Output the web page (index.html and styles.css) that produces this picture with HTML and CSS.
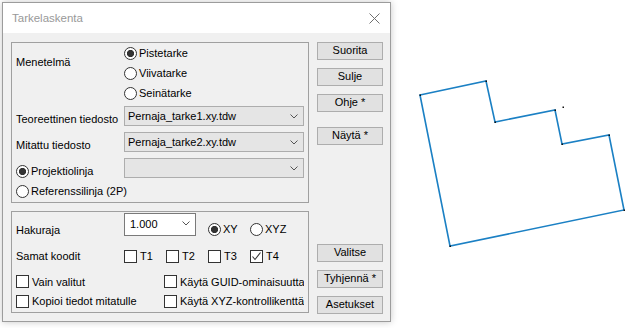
FILE: index.html
```html
<!DOCTYPE html>
<html lang="fi">
<head>
    <meta charset="UTF-8">
    <meta name="viewport" content="width=device-width, initial-scale=1.0">
    <title>Tarkelaskenta</title>
    <link rel="stylesheet" href="styles.css">
</head>
<body>
<div class="screen">
    <div class="dialog">
        <div class="titlebar">
            <span class="title">Tarkelaskenta</span>
            <svg class="close" width="11" height="11" viewBox="0 0 11 11">
                <path d="M0.5 0.5L10.5 10.5M10.5 0.5L0.5 10.5" stroke="#707070" stroke-width="1" fill="none"/>
            </svg>
        </div>

        <div class="dialog-body">
            <div class="groups">
                <div class="group method-group">
                    <div class="row method-row">
                        <span class="label method-label">Menetelmä</span>
                        <div class="radio-stack">
                            <div class="radio checked"><span class="circle"></span>Pistetarke</div>
                            <div class="radio"><span class="circle"></span>Viivatarke</div>
                            <div class="radio"><span class="circle"></span>Seinätarke</div>
                        </div>
                    </div>
                    <div class="row combo-row first">
                        <span class="label">Teoreettinen tiedosto</span>
                        <div class="combo">
                            <span class="combo-text">Pernaja_tarke1.xy.tdw</span>
                            <svg class="chevron" width="8" height="5" viewBox="0 0 8 5"><path d="M0.5 0.5L4 4L7.5 0.5" stroke="#555" fill="none"/></svg>
                        </div>
                    </div>
                    <div class="row combo-row">
                        <span class="label">Mitattu tiedosto</span>
                        <div class="combo">
                            <span class="combo-text">Pernaja_tarke2.xy.tdw</span>
                            <svg class="chevron" width="8" height="5" viewBox="0 0 8 5"><path d="M0.5 0.5L4 4L7.5 0.5" stroke="#555" fill="none"/></svg>
                        </div>
                    </div>
                    <div class="row combo-row">
                        <div class="radio checked label-radio"><span class="circle"></span>Projektiolinja</div>
                        <div class="combo">
                            <span class="combo-text"></span>
                            <svg class="chevron" width="8" height="5" viewBox="0 0 8 5"><path d="M0.5 0.5L4 4L7.5 0.5" stroke="#555" fill="none"/></svg>
                        </div>
                    </div>
                    <div class="row ref-row">
                        <div class="radio"><span class="circle"></span>Referenssilinja (2P)</div>
                    </div>
                </div>

                <div class="group search-group">
                    <div class="row search-row">
                        <span class="label search-label">Hakuraja</span>
                        <div class="edit-combo">
                            <span class="combo-text">1.000</span>
                            <svg class="chevron" width="8" height="5" viewBox="0 0 8 5"><path d="M0.5 0.5L4 4L7.5 0.5" stroke="#555" fill="none"/></svg>
                        </div>
                        <div class="inline-radios">
                            <div class="radio checked cell"><span class="circle"></span>XY</div>
                            <div class="radio cell"><span class="circle"></span>XYZ</div>
                        </div>
                    </div>
                    <div class="row codes-row">
                        <span class="label">Samat koodit</span>
                        <div class="check cell"><span class="box"></span>T1</div>
                        <div class="check cell"><span class="box"></span>T2</div>
                        <div class="check cell"><span class="box"></span>T3</div>
                        <div class="check cell checked"><span class="box"><svg width="11" height="11" viewBox="0 0 11 11"><path d="M1.5 5.5L4 8.5L9.5 1.5" stroke="#333" stroke-width="1.1" fill="none"/></svg></span>T4</div>
                    </div>
                    <div class="row option-row">
                        <div class="check wide"><span class="box"></span>Vain valitut</div>
                        <div class="check clipped"><span class="box"></span>Käytä GUID-ominaisuutta</div>
                    </div>
                    <div class="row option-row last">
                        <div class="check wide"><span class="box"></span>Kopioi tiedot mitatulle</div>
                        <div class="check clipped"><span class="box"></span>Käytä XYZ-kontrollikenttää</div>
                    </div>
                </div>
            </div>

            <div class="buttons">
                <div class="button">Suorita</div>
                <div class="button">Sulje</div>
                <div class="button">Ohje *</div>
                <div class="button show">Näytä *</div>
                <div class="button select">Valitse</div>
                <div class="button">Tyhjennä *</div>
                <div class="button">Asetukset</div>
            </div>
        </div>
    </div>

    <div class="canvas">
        <svg width="246" height="328" viewBox="391 0 246 328">
            <polygon class="outline" points="420,95 486,81 495,122 555,110 562,144 609,135 624,210 450,246"/>
            <g class="vertex">
                <rect x="419.5" y="94.5" width="1.5" height="1.5"/>
                <rect x="485.5" y="80.5" width="1.5" height="1.5"/>
                <rect x="494.5" y="121.5" width="1.5" height="1.5"/>
                <rect x="554.5" y="109.5" width="1.5" height="1.5"/>
                <rect x="561.5" y="143.5" width="1.5" height="1.5"/>
                <rect x="608.5" y="134.5" width="1.5" height="1.5"/>
                <rect x="623.5" y="209.5" width="1.5" height="1.5"/>
                <rect x="449.5" y="245.5" width="1.5" height="1.5"/>
                <rect x="562.5" y="106.5" width="1.5" height="1.5"/>
            </g>
        </svg>
    </div>
</div>
</body>
</html>
```

FILE: styles.css
```css
:root {
    --face: #f0f0f0;
    --frame: #a0a0a0;
    --btn: #e1e1e1;
    --btn-border: #adadad;
    --ink: #000000;
    --mark: #333333;
    --line-blue: #1b80c4;
}

body {
    margin: 0;
    background: #ffffff;
    font-family: 'Liberation Sans', Arial, sans-serif;
    font-size: 11px;
    color: var(--ink);
}

.screen {
    display: flex;
    height: 328px;
}

.dialog {
    margin: 2px 0 0 2px;
    width: 389px;
    height: 320px;
    box-sizing: border-box;
    border: 1px solid #9c9c9c;
    background: var(--face);
    box-shadow: 0 0 7px rgba(0, 0, 0, 0.22);
    display: flex;
    flex-direction: column;
}

.titlebar {
    height: 30px;
    flex: none;
    background: #ffffff;
    display: flex;
    align-items: center;
    justify-content: space-between;
    padding: 0 10px 0 9px;
}

.title {
    font-size: 11.5px;
    color: #999999;
    line-height: 16px;
}

.dialog-body {
    flex: 1;
    display: flex;
    gap: 8px;
    padding: 9px 7px 7px 8px;
}

.groups {
    width: 298px;
    display: flex;
    flex-direction: column;
    gap: 8px;
}

.group {
    border: 1px solid var(--frame);
    box-sizing: border-box;
    padding: 0 4px;
}

.method-group {
    height: 161px;
}

.search-group {
    height: 102px;
}

.row {
    display: flex;
}

.label {
    width: 108px;
    flex: none;
    line-height: 16px;
    white-space: nowrap;
}

/* method block */
.method-label {
    padding-top: 11px;
}

.radio-stack {
    display: flex;
    flex-direction: column;
}

.radio,
.check {
    display: flex;
    align-items: center;
    height: 20px;
    white-space: nowrap;
    line-height: 16px;
}

.circle {
    width: 13px;
    height: 13px;
    box-sizing: border-box;
    border: 1px solid var(--mark);
    border-radius: 50%;
    background: #ffffff;
    margin-right: 2px;
    flex: none;
}

.radio.checked .circle {
    background: radial-gradient(circle, var(--mark) 0 3.3px, #ffffff 3.9px);
}

.box {
    width: 13px;
    height: 13px;
    box-sizing: border-box;
    border: 1px solid var(--mark);
    background: #ffffff;
    margin-right: 3px;
    flex: none;
    display: flex;
    align-items: center;
    justify-content: center;
}

.box svg {
    display: block;
}

/* combos */
.combo-row {
    height: 20px;
    margin-top: 6px;
}

.combo-row.first {
    margin-top: 3px;
}

.combo-row .label {
    padding-top: 5px;
}

.label-radio {
    width: 108px;
    flex: none;
    margin-top: 3px;
}

.combo {
    width: 180px;
    height: 20px;
    box-sizing: border-box;
    border: 1px solid var(--btn-border);
    background: #e5e5e5;
    display: flex;
    align-items: center;
    justify-content: space-between;
    padding: 0 5px 0 3px;
}

.combo-text {
    line-height: 16px;
    white-space: nowrap;
}

.chevron {
    display: block;
    flex: none;
}

.ref-row {
    margin-top: 3px;
}

/* search group */
.search-row {
    height: 23px;
    margin-top: 1px;
}

.search-label {
    padding-top: 9px;
}

.edit-combo {
    width: 72px;
    height: 23px;
    box-sizing: border-box;
    border: 1px solid #7a7a7a;
    background: #ffffff;
    display: flex;
    align-items: center;
    justify-content: space-between;
    padding: 0 5px 2px 5px;
}

.inline-radios {
    display: flex;
    margin: 6px 0 0 12px;
}

.cell {
    width: 42px;
}

.codes-row {
    margin-top: 10px;
    height: 20px;
}

.codes-row .label {
    padding-top: 2px;
}

.option-row {
    margin-top: 6px;
    height: 19px;
}

.option-row.last {
    margin-top: 0;
    height: 20px;
}

.option-row .check {
    height: 19px;
}

.check.wide {
    width: 150px;
}

.check.clipped {
    width: 142px;
    overflow: hidden;
}

.option-row.last .check {
    height: 20px;
}

/* buttons */
.buttons {
    width: 66px;
    display: flex;
    flex-direction: column;
}

.button {
    height: 18px;
    box-sizing: border-box;
    border: 1px solid var(--btn-border);
    background: var(--btn);
    text-align: center;
    line-height: 15px;
    margin-bottom: 8px;
    white-space: nowrap;
}

.button.show {
    margin-top: 7px;
}

.button.select {
    margin-top: auto;
}

.buttons .button:last-child {
    margin-bottom: 0;
}

/* drawing */
.canvas {
    flex: 1;
}

.canvas svg {
    display: block;
}

.outline {
    fill: none;
    stroke: var(--line-blue);
    stroke-width: 1.6;
}

.vertex rect {
    fill: #111111;
}
```
